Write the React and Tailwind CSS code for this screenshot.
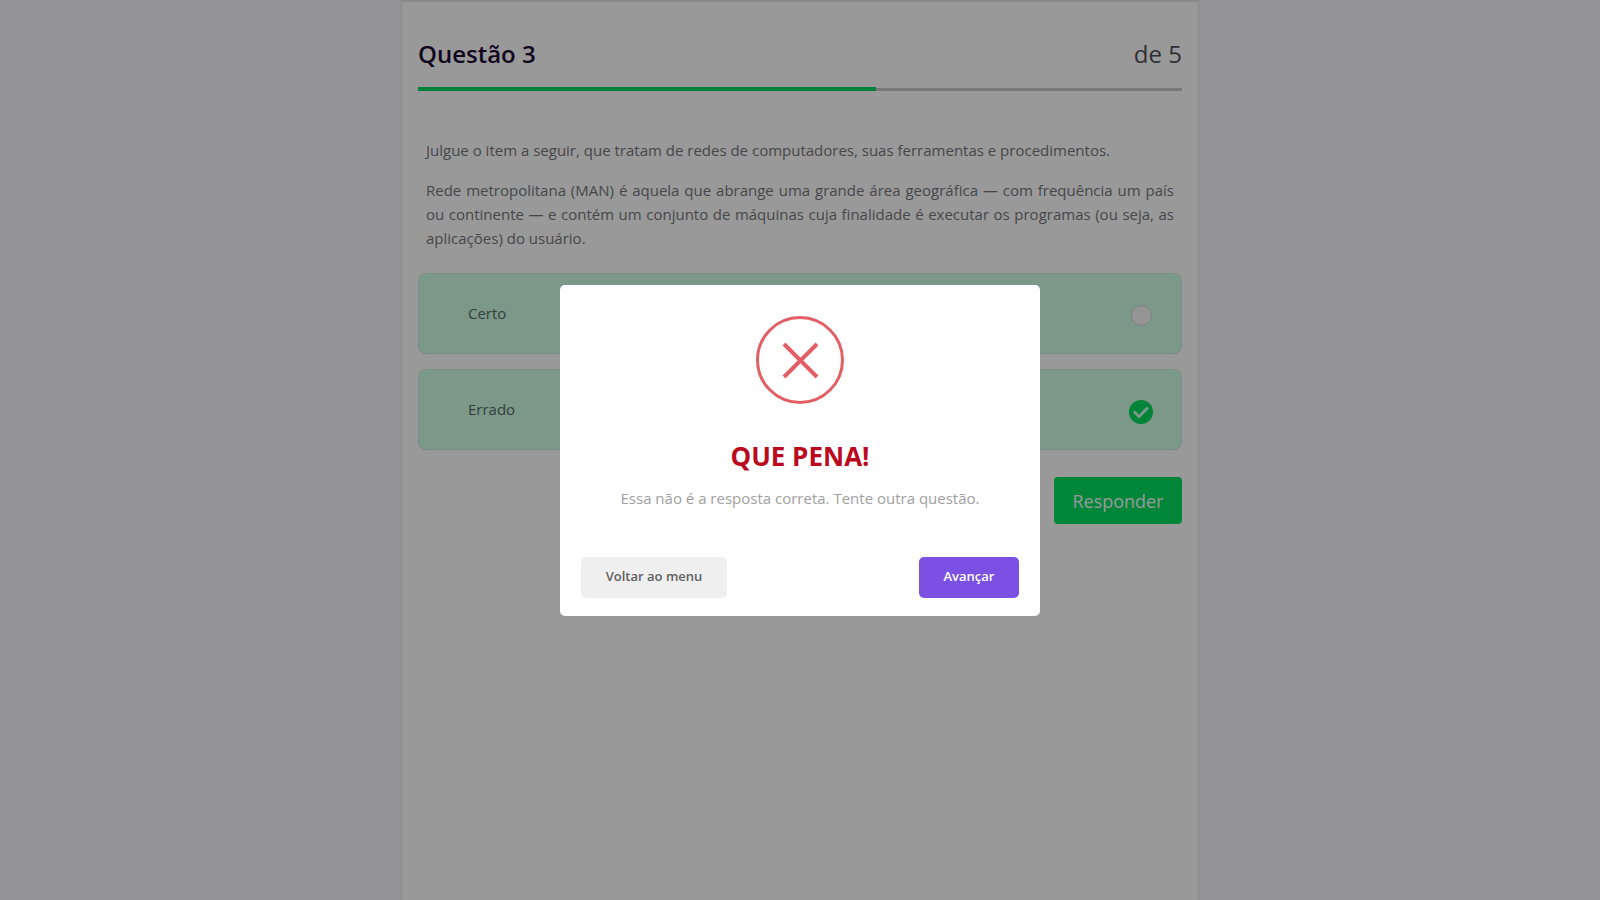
import React from 'react';

const options = [
    { id: 'certo', label: 'Certo' },
    { id: 'errado', label: 'Errado' },
];

const QuestionHeader = ({ current, total }) => {
    return (
        <header>
            <div className="flex items-center justify-between text-2xl leading-8">
                <h1 className="font-semibold text-[#1c0a33]">Questão {current}</h1>
                <span className="text-[#505058]">de {total}</span>
            </div>
            <div className="relative mt-[17px] flex h-1 items-center">
                <div className="h-[3px] w-full bg-[#c8c8ca]" />
                <div
                    className="absolute left-0 h-1 bg-[#00d860]"
                    style={{ width: `${(current / total) * 100}%` }}
                />
            </div>
        </header>
    );
};

const Option = ({ id, label, checked, onChange }) => {
    return (
        <label
            htmlFor={id}
            className="flex h-[81px] items-center justify-between rounded-lg border border-[#c0f2d8] bg-[#cdfde4] pr-7 pl-[49px] text-[15px] text-[#5a6b62]"
        >
            <span>{label}</span>
            <input
                id={id}
                type="radio"
                name="answer"
                checked={checked}
                onChange={onChange}
                className="peer sr-only"
            />
            <span className="mt-1 flex size-6 items-center justify-center">
                {checked ? (
                    <svg viewBox="0 0 24 24" className="size-6">
                        <circle cx="12" cy="12" r="12" fill="#00de5e" />
                        <path d="M5 11.5l5 5 9-9" fill="none" stroke="#cdfde4" strokeWidth="3" />
                    </svg>
                ) : (
                    <span className="size-[21px] rounded-full border border-[#d0dcd6] bg-[#f8f8f8]" />
                )}
            </span>
        </label>
    );
};

const ResultModal = () => {
    return (
        <div className="fixed inset-0 flex items-center justify-center bg-black/40">
            <div
                role="dialog"
                aria-labelledby="result-title"
                className="flex w-[480px] flex-col rounded-[5px] bg-white px-[21px] pt-[31px] pb-[18px]"
            >
                <svg viewBox="0 0 88 88" fill="none" stroke="#e26065" className="size-[88px] self-center">
                    <circle cx="44" cy="44" r="42.5" strokeWidth="3" />
                    <path d="M28 28l33 33M61 28l-33 33" strokeWidth="4" />
                </svg>
                <h2 id="result-title" className="mt-9 text-center text-[26px] leading-8 font-bold text-[#bb0a20]">
                    QUE PENA!
                </h2>
                <p className="mt-[14px] text-center text-[15px] leading-6 text-[#a0a0a0]">
                    Essa não é a resposta correta. Tente outra questão.
                </p>
                <div className="mt-[47px] flex justify-between text-[13px] font-semibold">
                    <button type="button" className="h-[41px] w-[146px] rounded-[5px] bg-[#efefef] text-[#606060]">
                        Voltar ao menu
                    </button>
                    <button type="button" className="h-[41px] w-[100px] rounded-[5px] bg-[#7b50e2] text-white">
                        Avançar
                    </button>
                </div>
            </div>
        </div>
    );
};

const App = () => {
    const [answer, setAnswer] = React.useState('errado');

    return (
        <div className="min-h-screen bg-[#f5f5f8] font-['Open_Sans','Noto_Sans',sans-serif]">
            <main className="mx-auto min-h-screen max-w-[798px] border-x border-t-2 border-[#e6e6e8] bg-white px-4 pt-9">
                <QuestionHeader current={3} total={5} />
                <div className="mt-[47px] space-y-4 px-2 text-[15px] leading-6 text-[#77777c]">
                    <p>Julgue o item a seguir, que tratam de redes de computadores, suas ferramentas e procedimentos.</p>
                    <p className="text-justify">
                        Rede metropolitana (MAN) é aquela que abrange uma grande área geográfica — com frequência um país
                        ou continente — e contém um conjunto de máquinas cuja finalidade é executar os programas (ou seja, as
                        aplicações) do usuário.
                    </p>
                </div>
                <div className="mt-[23px] space-y-[15px]">
                    {options.map((option) => (
                        <Option
                            key={option.id}
                            id={option.id}
                            label={option.label}
                            checked={answer === option.id}
                            onChange={() => setAnswer(option.id)}
                        />
                    ))}
                </div>
                <div className="mt-[27px] flex justify-end">
                    <button type="button" className="h-[47px] w-32 rounded bg-[#00e060] text-lg text-white">
                        Responder
                    </button>
                </div>
            </main>
            <ResultModal />
        </div>
    );
};

export default App;
